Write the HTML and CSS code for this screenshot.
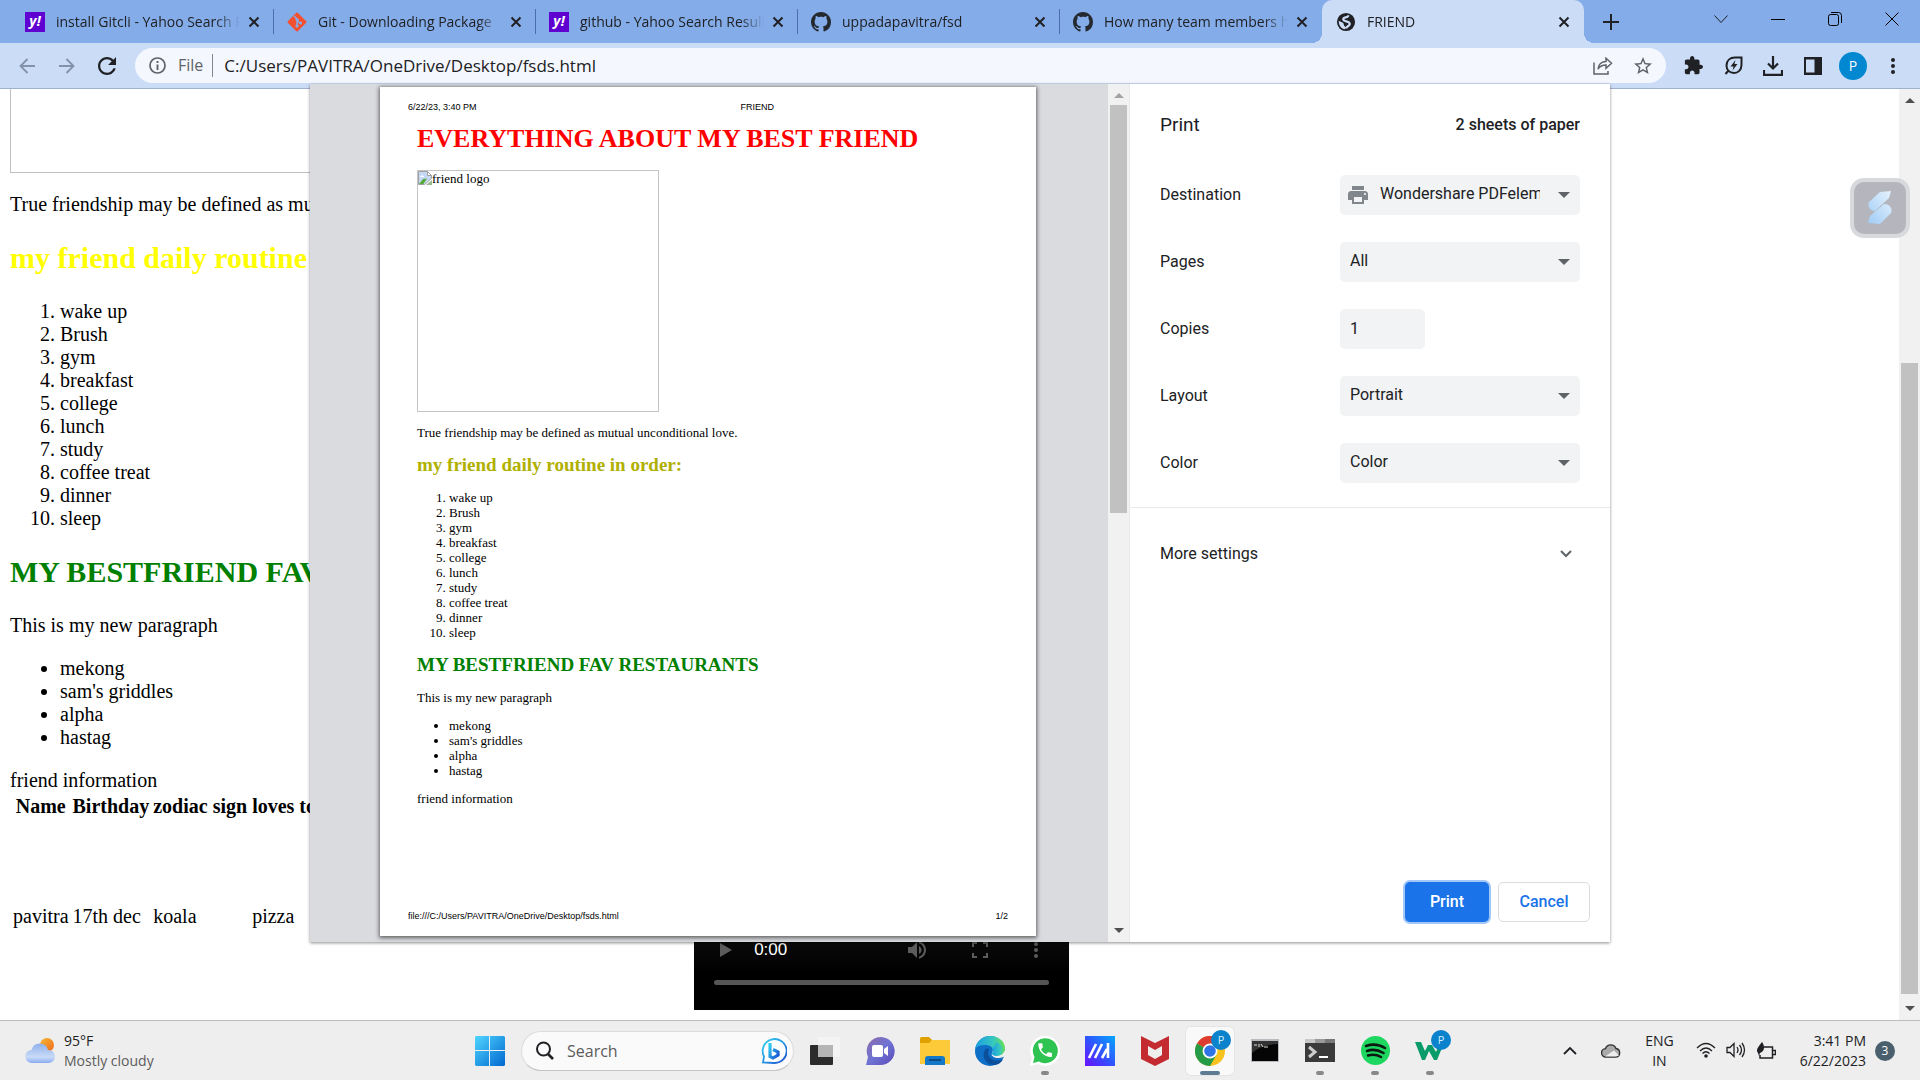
FILE: index.html
```html
<!DOCTYPE html>
<html lang="en">
<head>
<meta charset="utf-8">
<title>FRIEND</title>
<link rel="stylesheet" href="styles.css">
</head>
<body>
<svg class="defs" aria-hidden="true">
  <symbol id="close" viewBox="0 0 12 12"><path d="M1.5 1.5l9 9M10.5 1.5l-9 9" fill="none" stroke="currentColor" stroke-width="2"/></symbol>
  <symbol id="github" viewBox="0 0 16 16"><path fill="#24292f" d="M8 0C3.58 0 0 3.58 0 8c0 3.54 2.29 6.53 5.47 7.59.4.07.55-.17.55-.38 0-.19-.01-.82-.01-1.49-2.01.37-2.53-.49-2.69-.94-.09-.23-.48-.94-.82-1.13-.28-.15-.68-.52-.01-.53.63-.01 1.08.58 1.23.82.72 1.21 1.87.87 2.33.66.07-.52.28-.87.51-1.07-1.78-.2-3.64-.89-3.64-3.95 0-.87.31-1.59.82-2.15-.08-.2-.36-1.02.08-2.12 0 0 .67-.21 2.2.82.64-.18 1.32-.27 2-.27.68 0 1.36.09 2 .27 1.53-1.04 2.2-.82 2.2-.82.44 1.1.16 1.92.08 2.12.51.56.82 1.27.82 2.15 0 3.07-1.87 3.75-3.65 3.95.29.25.54.73.54 1.48 0 1.07-.01 1.93-.01 2.2 0 .21.15.46.55.38A8.013 8.013 0 0016 8c0-4.42-3.58-8-8-8z"/></symbol>
  <symbol id="caret" viewBox="0 0 12 6"><path d="M0 0h12L6 6z" fill="currentColor"/></symbol>
  <symbol id="caret-up" viewBox="0 0 12 6"><path d="M0 6h12L6 0z" fill="currentColor"/></symbol>
</svg>

<header class="tabstrip">
  <nav class="tabs" aria-label="Tabs">
    <div class="tab"><span class="favicon yahoo">y!</span><span class="tab-title">install Gitcli - Yahoo Search Results</span><button class="tab-close" aria-label="Close tab"><svg width="12" height="12"><use href="#close"/></svg></button></div>
    <div class="tab"><svg class="favicon" viewBox="0 0 20 20"><rect x="3" y="3" width="14" height="14" rx="1" transform="rotate(45 10 10)" fill="#f4502f"/><path d="M7 4l3 3v7M10 8l3.500 3.500" stroke="#84ace9" stroke-width="1.500" fill="none"/><circle cx="10" cy="7.500" r="1.600" fill="#84ace9"/><circle cx="10" cy="14" r="1.600" fill="#84ace9"/><circle cx="13.500" cy="11" r="1.600" fill="#84ace9"/></svg><span class="tab-title">Git - Downloading Package</span><button class="tab-close" aria-label="Close tab"><svg width="12" height="12"><use href="#close"/></svg></button></div>
    <div class="tab"><span class="favicon yahoo">y!</span><span class="tab-title">github - Yahoo Search Results</span><button class="tab-close" aria-label="Close tab"><svg width="12" height="12"><use href="#close"/></svg></button></div>
    <div class="tab"><svg class="favicon"><use href="#github"/></svg><span class="tab-title">uppadapavitra/fsd</span><button class="tab-close" aria-label="Close tab"><svg width="12" height="12"><use href="#close"/></svg></button></div>
    <div class="tab last"><svg class="favicon"><use href="#github"/></svg><span class="tab-title">How many team members have</span><button class="tab-close" aria-label="Close tab"><svg width="12" height="12"><use href="#close"/></svg></button></div>
    <div class="tab active"><svg class="favicon" viewBox="1 1 22 22"><circle cx="12" cy="12" r="10" fill="#202124"/><path d="M14.500 4.500c0 3.500-5.500 1.500-5.500 4.500s6 1.500 7 4.500-3 2.500-4 5.500" fill="none" stroke="#cbdcf7" stroke-width="2.400"/><path d="M4 10.500l5 2.500 1 3 2 2-1 2C7 19.500 4 16 4 10.500z" fill="#cbdcf7"/></svg><span class="tab-title">FRIEND</span><button class="tab-close" aria-label="Close tab"><svg width="12" height="12"><use href="#close"/></svg></button></div>
  </nav>
  <button class="icon-btn new-tab" aria-label="New tab"><svg width="16" height="16" viewBox="0 0 16 16"><path d="M8 0v16M0 8h16" stroke="#202124" stroke-width="2"/></svg></button>
  <div class="window-controls">
    <button class="icon-btn" aria-label="Search tabs"><svg width="14" height="14" viewBox="0 0 14 14"><path d="M.5 3.500l6.500 7 6.500-7" fill="none" stroke="#202124"/></svg></button>
    <button class="icon-btn" aria-label="Minimize"><svg width="14" height="14" viewBox="0 0 14 14"><path d="M0 7.500h14" stroke="#000"/></svg></button>
    <button class="icon-btn" aria-label="Restore"><svg width="14" height="14" viewBox="0 0 14 14"><rect x=".5" y="2.500" width="10" height="11" rx="2" fill="none" stroke="#000"/><path d="M3 .5h7.500a3 3 0 013 3V11" fill="none" stroke="#000"/></svg></button>
    <button class="icon-btn" aria-label="Close"><svg width="14" height="14" viewBox="0 0 14 14"><path d="M.5.5l13 13M13.500.5l-13 13" stroke="#000"/></svg></button>
  </div>
</header>

<div class="toolbar">
  <button class="icon-btn dim" aria-label="Back"><svg width="16" height="16" viewBox="0 0 16 16"><path d="M16 8H1.500M8.500 1L1.500 8l7 7" fill="none" stroke="currentColor" stroke-width="1.800"/></svg></button>
  <button class="icon-btn dim" aria-label="Forward"><svg width="16" height="16" viewBox="0 0 16 16"><path d="M0 8h14.500M7.500 1l7 7-7 7" fill="none" stroke="currentColor" stroke-width="1.800"/></svg></button>
  <button class="icon-btn" aria-label="Reload"><svg width="18" height="18" viewBox="4 4 16 16"><path fill="currentColor" d="M17.650 6.350C16.200 4.900 14.210 4 12 4c-4.420 0-7.990 3.580-7.990 8s3.570 8 7.990 8c3.730 0 6.840-2.550 7.730-6h-2.080c-.82 2.330-3.040 4-5.650 4-3.310 0-6-2.690-6-6s2.690-6 6-6c1.660 0 3.140.69 4.220 1.780L13 11h7V4l-2.350 2.350z"/></svg></button>
  <div class="omnibox">
    <svg width="17" height="17" viewBox="0 0 17 17"><circle cx="8.500" cy="8.500" r="7.500" fill="none" stroke="#5f6368" stroke-width="1.700"/><path d="M8.500 7.500V13M8.500 4v2" stroke="#5f6368" stroke-width="1.900"/></svg>
    <span class="scheme">File</span>
    <input class="url" type="text" aria-label="Address" value="C:/Users/PAVITRA/OneDrive/Desktop/fsds.html">
    <button class="icon-btn" aria-label="Share"><svg width="20" height="18" viewBox="0 0 20 18"><path d="M1 5.500V17h14v-3M5 12c.5-5 4-7.500 8-7.500V1.200l5.500 5-5.500 5V8C9 8 7 9 5 12z" fill="none" stroke="#5f6368" stroke-width="1.500"/></svg></button>
    <button class="icon-btn" aria-label="Bookmark"><svg width="18" height="18" viewBox="2 2 20 20"><path fill="#5f6368" d="M22 9.240l-7.190-.62L12 2 9.190 8.630 2 9.240l5.460 4.730L5.820 21 12 17.270 18.180 21l-1.630-7.030L22 9.240zM12 15.400l-3.760 2.270 1-4.280-3.320-2.880 4.380-.38L12 6.100l1.710 4.040 4.380.38-3.320 2.880 1 4.280L12 15.400z"/></svg></button>
  </div>
  <div class="extensions">
    <button class="icon-btn" aria-label="Extensions"><svg width="19" height="19" viewBox="1 1 22 22"><path fill="currentColor" d="M20.500 11H19V7c0-1.100-.9-2-2-2h-4V3.500C13 2.120 11.880 1 10.500 1S8 2.120 8 3.500V5H4c-1.100 0-1.990.9-1.990 2v3.800H3.500c1.490 0 2.700 1.210 2.700 2.700s-1.210 2.700-2.700 2.700H2V20c0 1.100.9 2 2 2h3.800v-1.500c0-1.490 1.210-2.700 2.700-2.700 1.490 0 2.700 1.210 2.700 2.700V22H17c1.100 0 2-.9 2-2v-4h1.500c1.380 0 2.500-1.120 2.500-2.500S21.880 11 20.500 11z"/></svg></button>
    <button class="icon-btn" aria-label="Energy saver"><svg width="19" height="19" viewBox="0 0 19 19"><path d="M17.500 1.500v7.500c0 5-3.500 8-7.500 8s-7.500-2.500-7.500-7.500 3.500-8 8.500-8zM4.500 14.500l-3 3.500" fill="none" stroke="currentColor" stroke-width="2"/><path d="M11.500 4L6.500 10.500h3l-1 4L13.500 8h-3z" fill="currentColor"/></svg></button>
    <button class="icon-btn" aria-label="Downloads"><svg width="20" height="20" viewBox="0 0 20 20"><path d="M10 0v12M5 7.500l5 5 5-5M1 14v4.800h18V14" fill="none" stroke="currentColor" stroke-width="2.200"/></svg></button>
    <button class="icon-btn" aria-label="Side panel"><svg width="18" height="18" viewBox="0 0 18 18"><path fill="currentColor" fill-rule="evenodd" d="M0 0h18v18H0zm2 2.500v13h8.500v-13z"/></svg></button>
    <button class="icon-btn" aria-label="Profile"><span class="avatar">P</span></button>
    <button class="icon-btn" aria-label="Menu"><svg width="4" height="16" viewBox="0 0 4 16"><g fill="currentColor"><circle cx="2" cy="2" r="2"/><circle cx="2" cy="8" r="2"/><circle cx="2" cy="14" r="2"/></g></svg></button>
  </div>
</div>

<main class="viewport">
  <article class="doc">
    <div class="doc-image"></div>
    <p>True friendship may be defined as mutual unconditional love.</p>
    <h2 class="yellow">my friend daily routine in order:</h2>
    <ol><li>wake up</li><li>Brush</li><li>gym</li><li>breakfast</li><li>college</li><li>lunch</li><li>study</li><li>coffee treat</li><li>dinner</li><li>sleep</li></ol>
    <h2 class="green">MY BESTFRIEND FAV RESTAURANTS</h2>
    <p>This is my new paragraph</p>
    <ul><li>mekong</li><li>sam's griddles</li><li>alpha</li><li>hastag</li></ul>
    <div class="info">friend information</div>
    <table>
      <thead><tr><th>Name</th><th>Birthday</th><th>zodiac sign</th><th class="loves">loves to eat</th><th></th></tr></thead>
      <tbody><tr><td>pavitra</td><td>17th dec</td><td>koala</td><td>pizza</td><td>
        <div class="video">
          <div class="video-controls">
            <button class="icon-btn" aria-label="Play"><svg width="12" height="14" viewBox="0 0 12 14"><path d="M0 0l12 7-12 7z" fill="currentColor"/></svg></button>
            <span class="video-time">0:00</span>
            <button class="icon-btn" aria-label="Mute"><svg width="24" height="24" viewBox="0 0 24 24"><path fill="currentColor" d="M3 9v6h4l5 5V4L7 9H3zm13.500 3c0-1.770-1.020-3.290-2.500-4.030v8.050c1.480-.73 2.500-2.250 2.500-4.020zM14 3.230v2.060c2.890.86 5 3.540 5 6.710s-2.110 5.850-5 6.710v2.060c4.010-.91 7-4.490 7-8.770s-2.990-7.860-7-8.770z"/></svg></button>
            <button class="icon-btn" aria-label="Full screen"><svg width="16" height="16" viewBox="0 0 16 16"><path d="M1 5V1h4M11 1h4v4M15 11v4h-4M5 15H1v-4" fill="none" stroke="currentColor" stroke-width="2"/></svg></button>
            <button class="icon-btn" aria-label="More"><svg width="4" height="16" viewBox="0 0 4 16"><g fill="currentColor"><circle cx="2" cy="2" r="2"/><circle cx="2" cy="8" r="2"/><circle cx="2" cy="14" r="2"/></g></svg></button>
          </div>
          <div class="video-track"></div>
        </div>
      </td></tr></tbody>
    </table>
  </article>
  <div class="scrollbar page-scroll">
    <svg width="10" height="5"><use href="#caret-up"/></svg>
    <div class="scroll-track"><div class="page-thumb"></div></div>
    <svg width="10" height="5"><use href="#caret"/></svg>
  </div>
  <button class="widget" aria-label="Assistant"><svg width="26" height="34" viewBox="0 0 26 34"><defs><linearGradient id="wg" x1="0" y1="1" x2="1" y2="0"><stop offset="0" stop-color="#9fcbf5"/><stop offset="1" stop-color="#e6f3fe"/></linearGradient></defs><path d="M13 1l11-1-2 7L8 20c-5 0-8-5-6-9zM13 33L1 32l2-7L17 13c6 0 9 5 7 9z" fill="url(#wg)"/></svg></button>

  <section class="dialog" role="dialog" aria-label="Print">
    <div class="preview">
      <div class="paper">
        <div class="paper-head"><span>6/22/23, 3:40 PM</span><span class="paper-title">FRIEND</span></div>
        <div class="paper-body">
          <h1>EVERYTHING ABOUT MY BEST FRIEND</h1>
          <div class="broken"><svg width="14" height="14" viewBox="0 0 14 14"><path d="M.5.5h9l4 4v3l-7 6h-6z" fill="#c5d8f5" stroke="#a0a0a0"/><path d="M9.500.5v4h4z" fill="#fff" stroke="#a0a0a0"/><path d="M1 13l4-5 4-.5L5.500 13z" fill="#58a93c"/><path d="M2 6c0-2 4-2 4 0z" fill="#fff"/><path d="M8 14l6-5v5z" fill="#9ab98f"/></svg><span>friend logo</span></div>
          <p>True friendship may be defined as mutual unconditional love.</p>
          <h2 class="olive">my friend daily routine in order:</h2>
          <ol><li>wake up</li><li>Brush</li><li>gym</li><li>breakfast</li><li>college</li><li>lunch</li><li>study</li><li>coffee treat</li><li>dinner</li><li>sleep</li></ol>
          <h2 class="green">MY BESTFRIEND FAV RESTAURANTS</h2>
          <p>This is my new paragraph</p>
          <ul><li>mekong</li><li>sam's griddles</li><li>alpha</li><li>hastag</li></ul>
          <p>friend information</p>
        </div>
        <div class="paper-foot"><span>file:///C:/Users/PAVITRA/OneDrive/Desktop/fsds.html</span><span>1/2</span></div>
      </div>
    </div>
    <div class="scrollbar preview-scroll">
      <svg class="muted" width="10" height="5"><use href="#caret-up"/></svg>
      <div class="scroll-track"><div class="preview-thumb"></div></div>
      <svg width="10" height="5"><use href="#caret"/></svg>
    </div>
    <form class="settings">
      <div class="settings-head"><span class="settings-title">Print</span><span class="sheets">2 sheets of paper</span></div>
      <div class="fields">
        <label for="dest">Destination</label>
        <div class="select"><select id="dest" class="with-icon"><option>Wondershare PDFelement</option></select><svg class="printer" width="24" height="24" viewBox="0 0 24 24"><path fill="#80868b" d="M19 8H5c-1.660 0-3 1.340-3 3v6h4v4h12v-4h4v-6c0-1.660-1.340-3-3-3zm-3 11H8v-5h8v5zm3-7c-.55 0-1-.45-1-1s.45-1 1-1 1 .45 1 1-.45 1-1 1zm-1-9H6v4h12V3z"/></svg><svg class="arrow" width="12" height="6"><use href="#caret"/></svg></div>
        <label for="pages">Pages</label>
        <div class="select"><select id="pages"><option>All</option></select><svg class="arrow" width="12" height="6"><use href="#caret"/></svg></div>
        <label for="copies">Copies</label>
        <input id="copies" type="text" value="1">
        <label for="layout">Layout</label>
        <div class="select"><select id="layout"><option>Portrait</option></select><svg class="arrow" width="12" height="6"><use href="#caret"/></svg></div>
        <label for="color">Color</label>
        <div class="select"><select id="color"><option>Color</option></select><svg class="arrow" width="12" height="6"><use href="#caret"/></svg></div>
      </div>
      <button type="button" class="more"><span>More settings</span><svg width="12" height="8" viewBox="0 0 12 8"><path d="M1 1l5 5 5-5" fill="none" stroke="#5f6368" stroke-width="2"/></svg></button>
      <div class="actions"><button type="button" class="btn primary">Print</button><button type="button" class="btn">Cancel</button></div>
    </form>
  </section>
</main>

<footer class="taskbar">
  <div class="weather">
    <svg width="30" height="26" viewBox="0 0 30 26"><defs><linearGradient id="sun" x1="0" y1="0" x2="1" y2="1"><stop offset="0" stop-color="#f7b733"/><stop offset="1" stop-color="#ee6a1c"/></linearGradient><linearGradient id="cl" x1="0" y1="0" x2="0" y2="1"><stop offset="0" stop-color="#8fb1ec"/><stop offset=".7" stop-color="#c9dbf7"/><stop offset="1" stop-color="#88aaf0"/></linearGradient></defs><circle cx="22" cy="7" r="7" fill="url(#sun)"/><path d="M7 25a6.500 6.500 0 01-.5-13A8.500 8.500 0 0123 12a6.500 6.500 0 011 13z" fill="url(#cl)"/></svg>
    <div class="two-line"><span>95°F</span><span class="soft">Mostly cloudy</span></div>
  </div>
  <div class="apps">
    <button class="app" aria-label="Start"><svg width="30" height="30" viewBox="0 0 30 30"><defs><linearGradient id="win" x1="0" y1="0" x2="1" y2="1"><stop offset="0" stop-color="#4fd6ff"/><stop offset="1" stop-color="#0067d0"/></linearGradient></defs><path d="M1 0h13v14H0V1zM15 0h14l1 1v13H15zM0 15h14v15H1l-1-1zM15 15h15v14l-1 1H15z" fill="url(#win)"/></svg></button>
    <label class="search"><svg width="20" height="20" viewBox="0 0 20 20"><circle cx="8.500" cy="8" r="6.500" fill="none" stroke="#202124" stroke-width="2"/><path d="M13 13l5 5" stroke="#202124" stroke-width="2.600"/></svg><input type="text" placeholder="Search" aria-label="Search"><svg width="26" height="26" viewBox="0 0 26 26"><defs><linearGradient id="bing" x1="0" y1="0" x2="1" y2="1"><stop offset="0" stop-color="#30d2f2"/><stop offset="1" stop-color="#1b4fd0"/></linearGradient></defs><path d="M2 24.500l1-6A12 12 0 1113 25z" fill="#fff" stroke="url(#bing)" stroke-width="1.800"/><path d="M9 5v13.500l3 1.500 5-3v-3l-5-2.500" fill="none" stroke="url(#bing)" stroke-width="3.200"/></svg></label>
    <button class="app" aria-label="Task view"><svg width="30" height="30" viewBox="0 0 30 30"><rect y="9" width="23" height="20" rx="1" fill="#2b2b2b"/><rect x="8" y="1" width="22" height="20" rx="1" fill="#f4f4f4"/><path d="M8 9h15v12H8z" fill="#b5b5b5"/></svg></button>
    <button class="app" aria-label="Chat"><svg width="30" height="30" viewBox="0 0 30 30"><defs><linearGradient id="chat" x1="0" y1="0" x2="1" y2="1"><stop offset="0" stop-color="#8f6aa8"/><stop offset=".5" stop-color="#6f74d4"/><stop offset="1" stop-color="#5a48b8"/></linearGradient></defs><path d="M1 29l2-8A14 14 0 1115 29z" fill="url(#chat)"/><rect x="7" y="9" width="11" height="12" rx="2" fill="#fff"/><path d="M19 13l4-3v10l-4-3z" fill="#fff"/></svg></button>
    <button class="app" aria-label="File Explorer"><svg width="30" height="28" viewBox="0 0 30 28"><path d="M0 1.500Q0 0 1.500 0H9l3 3-2 4H0z" fill="#e0a000"/><path d="M0 6h9l3-3h18v24H0z" fill="#fdcb3a"/><path d="M5 28v-6q0-3 3-3h14q3 0 3 3v6z" fill="#1478c8"/><path d="M9 23h12" stroke="#0a4a86" stroke-width="2"/></svg></button>
    <button class="app" aria-label="Edge"><svg width="30" height="30" viewBox="0 0 30 30"><defs><linearGradient id="eg" x1="0" y1="0" x2="1" y2="0"><stop offset="0" stop-color="#1b9de2"/><stop offset=".6" stop-color="#35c7c0"/><stop offset="1" stop-color="#6be04f"/></linearGradient></defs><circle cx="15" cy="15" r="15" fill="#0f6ec6"/><path d="M0 14C1 5 8 0 15 0c9 0 15 6 15 12 0 5-4 8-9 8-4 0-5-2-4-3 3-4-1-8-6-8C6 9 1 10 0 14z" fill="url(#eg)"/><path d="M10 14c-4 6 1 15 9 15 4 0 8-3 9-6-3 2-8 2-11 0-4-2-5-6-3-9 0-2-3-2-4 0z" fill="#0c4f9a"/><path d="M17.500 15c1.500 3-1 4-1 3 0 2 3 4.500 8 4 2 0 4-2 5.500-1v-6z" fill="#eee"/><path d="M17 13c2 2 1 4 0 5 1 2 4 2 5 2 4 0 8-3 8-8L22 6z" fill="url(#eg)"/></svg></button>
    <button class="app running" aria-label="WhatsApp"><svg width="30" height="30" viewBox="0 0 30 30"><path d="M0 30l2-8A15 15 0 118 28z" fill="#fff"/><path d="M3 27l1.500-6A12.500 12.500 0 119 25.500z" fill="#2fc352"/><path transform="translate(6 5) scale(.76)" fill="#fff" d="M6.620 10.790c1.440 2.830 3.760 5.140 6.590 6.590l2.200-2.200c.27-.27.67-.36 1.020-.24 1.120.37 2.330.57 3.570.57.55 0 1 .45 1 1V20c0 .55-.45 1-1 1-9.390 0-17-7.610-17-17 0-.55.45-1 1-1h3.500c.55 0 1 .45 1 1 0 1.250.2 2.450.57 3.570.11.35.03.74-.25 1.020l-2.200 2.200z"/></svg></button>
    <button class="app" aria-label="MyASUS"><svg width="30" height="30" viewBox="0 0 30 30"><defs><linearGradient id="asus" x1="0" y1="1" x2="1" y2="0"><stop offset="0" stop-color="#6a11ff"/><stop offset=".5" stop-color="#2f55ff"/><stop offset="1" stop-color="#06a8ff"/></linearGradient></defs><path d="M0 0h30v30H0z" fill="url(#asus)"/><path d="M4 22l7-14M10 22l7-14M17 22l5-9M23 7v15" fill="none" stroke="#fff" stroke-width="2.600"/></svg></button>
    <button class="app" aria-label="McAfee"><svg width="28" height="30" viewBox="0 0 28 30"><path d="M0 0l14 7L28 0v23l-14 7-14-7zM7 10v9l7 4 7-4v-9l-7 4z" fill="#c42b30" fill-rule="evenodd"/></svg></button>
    <button class="app current" aria-label="Chrome"><svg width="30" height="30" viewBox="0 0 30 30"><circle cx="15" cy="15" r="15" fill="#f9c31f"/><path d="M15 15L2 7.500A15 15 0 0128 7.500H15z" fill="#de3b31"/><path d="M2 7.500A15 15 0 0015 30l6.500-11.500L15 15z" fill="#259b48"/><circle cx="15" cy="15" r="7.500" fill="#fff"/><circle cx="15" cy="15" r="5.800" fill="#2f74e6"/></svg><span class="badge">P</span></button>
    <button class="app" aria-label="Command Prompt"><svg width="28" height="23" viewBox="0 0 28 23"><path d="M0 0h28v23H0z" fill="#b8bcc0"/><path d="M1 2h26v20H1z" fill="#050505"/><path d="M1 2h26v3Q10 6 1 14z" fill="#333"/><path d="M3 6h3M8 5v3M10 5l2 3M13 8h4" stroke="#ddd"/></svg></button>
    <button class="app running" aria-label="Terminal"><svg width="30" height="23" viewBox="0 0 30 23"><path d="M0 0h30v23H0z" fill="#3a3a3a"/><path d="M0 0h10v4H0z" fill="#c8c8c8"/><path d="M10 0h10v4H10z" fill="#9a9a9a"/><path d="M20 0h10v4H20z" fill="#777"/><path d="M4 8l6 5-6 5" fill="none" stroke="#ccc" stroke-width="3"/><path d="M14 18h9" stroke="#fff" stroke-width="2"/></svg></button>
    <button class="app running" aria-label="Spotify"><svg width="29" height="29" viewBox="0 0 29 29"><circle cx="14.500" cy="14.500" r="14.500" fill="#1ed760"/><path d="M5 10q10-3.500 19 2M6 15q8-3 16.500 2M7 19.500q7-2 13 1.500" fill="none" stroke="#0b1a10" stroke-width="2.600" stroke-linecap="round"/></svg></button>
    <button class="app running" aria-label="Wondershare"><svg width="30" height="20" viewBox="0 0 30 20"><path d="M0 1h6l4 9 3-6h4l4 7 4-9h4l-7 17h-3l-5-9-4 9H7z" fill="#0a9b6b"/></svg><span class="badge">P</span></button>
  </div>
  <div class="tray">
    <svg width="14" height="9" viewBox="0 0 14 9"><path d="M1 8l6-6 6 6" fill="none" stroke="#202124" stroke-width="1.800"/></svg>
    <svg class="cloud" width="20" height="15" viewBox="0 0 20 15"><path d="M5 14a4.200 4.200 0 01-.5-8.400A5.600 5.600 0 0115 5.500a4.300 4.300 0 010 8.500z" fill="#aaa" stroke="#303030" stroke-width="1.400"/><path d="M4 13.500l9-6 5 5-3 1z" fill="#eee"/></svg>
    <div class="two-line lang"><span>ENG</span><span>IN</span></div>
    <div class="status">
      <svg width="20" height="16" viewBox="0 0 20 16"><g fill="none" stroke="#202124" stroke-width="1.300"><path d="M1 6q9-9 18 0M4 9q6-6 12 0M6.500 11.500q3.500-3.500 7 0"/></g><circle cx="10" cy="14" r="1.800" fill="#202124"/></svg>
      <svg width="20" height="16" viewBox="0 0 20 16"><g fill="none" stroke="#202124" stroke-width="1.300"><path d="M1 5.500h3l4-4v13l-4-4H1zM11 5q2 3 0 6M13.500 3q4 5 0 10M16 1q5 7 0 14"/></g></svg>
      <svg width="20" height="18" viewBox="0 0 20 18"><path d="M8 5h8.500v11H4v-3M17 8.500h2.500v4H17" fill="none" stroke="#202124" stroke-width="1.500"/><path d="M6 0c3 4 3 9-2 11L3 14l-1-3C-1 8 3 4 6 0z" fill="#202124"/></svg>
    </div>
    <div class="two-line clock"><span>3:41 PM</span><span>6/22/2023</span></div>
    <span class="count">3</span>
  </div>
</footer>
</body>
</html>
```
FILE: styles.css
```css
* { box-sizing: border-box; }

body {
  margin: 0;
  min-height: 100vh;
  display: flex;
  flex-direction: column;
  overflow: hidden;
  background: #fff;
  color: #202124;
  font-family: "Open Sans", "Noto Sans", sans-serif;
  font-size: 14px;
}

button, input, select { font: inherit; color: inherit; }
svg { display: block; flex: none; }
.defs { position: absolute; width: 0; height: 0; }

.icon-btn {
  display: flex;
  align-items: center;
  justify-content: center;
  width: 40px;
  height: 32px;
  padding: 0;
  border: 0;
  background: none;
}
.dim { color: #8491a8; }

/* Tab strip */
.tabstrip {
  display: flex;
  align-items: center;
  height: 43px;
  padding-left: 12px;
  background: #84ace9;
}
.tabs { display: flex; align-self: stretch; }
.tab {
  position: relative;
  display: flex;
  align-items: center;
  width: 262px;
  padding: 0 10px 0 13px;
}
.tab::after {
  content: "";
  position: absolute;
  right: 0;
  top: 9px;
  width: 1px;
  height: 25px;
  background: #4b6fa8;
}
.tab.last::after { display: none; }
.tab.active {
  padding-left: 14px;
  border-radius: 10px 10px 0 0;
  background: #cbdcf7;
}
.tab.active::before,
.tab.active::after {
  content: "";
  position: absolute;
  top: auto;
  bottom: 0;
  width: 10px;
  height: 10px;
}
.tab.active::before { left: -10px; background: radial-gradient(circle at 0 0, #84ace9 10px, #cbdcf7 10px); }
.tab.active::after { right: -10px; background: radial-gradient(circle at 100% 0, #84ace9 10px, #cbdcf7 10px); }
.favicon { width: 20px; height: 20px; flex: none; }
.yahoo {
  background: #5f01d1;
  color: #fff;
  font: italic bold 14px/18px "Open Sans", sans-serif;
  text-align: center;
}
.tab-title {
  flex: 1;
  margin-left: 11px;
  overflow: hidden;
  white-space: nowrap;
  mask-image: linear-gradient(to left, transparent, #000 24px);
}
.tab-close {
  display: flex;
  margin-left: 4px;
  padding: 4px;
  border: 0;
  background: none;
}
.new-tab { margin-left: 7px; }
.window-controls { display: flex; margin-left: auto; padding-bottom: 6px; }
.window-controls .icon-btn { width: 57px; }

/* Toolbar */
.toolbar {
  display: flex;
  align-items: center;
  height: 46px;
  padding: 0 7px;
  border-bottom: 1px solid #9fb1d1;
  background: #cbdcf7;
}
.omnibox {
  display: flex;
  flex: 1;
  align-items: center;
  height: 35px;
  margin-left: 8px;
  padding: 0 3px 0 14px;
  border-radius: 18px;
  background: #f4f7fd;
  font-size: 16px;
}
.scheme {
  margin-left: 12px;
  padding-right: 9px;
  border-right: 1px solid #80868b;
  line-height: 23px;
  color: #5f6368;
}
.url {
  flex: 1;
  margin-left: 11px;
  padding: 0;
  border: 0;
  background: none;
  outline: 0;
  font-size: 17px;
}
.extensions { display: flex; margin-left: 7px; }
.avatar {
  width: 28px;
  height: 28px;
  border-radius: 50%;
  background: #0288d1;
  color: #fff;
  font-size: 14px;
  line-height: 28px;
  text-align: center;
}

/* Page behind the dialog */
.viewport { position: relative; display: flex; flex: 1; }
.doc {
  flex: 1;
  padding-left: 10px;
  color: #000;
  font: 20px/23px "Liberation Serif", "Times New Roman", serif;
}
.doc-image { width: 377px; height: 84px; border: 1px solid #c0c0c0; border-top: 0; }
.doc p { margin: 20px 0; }
.doc h2 { margin: 25px 0; font-size: 30px; line-height: 34px; }
.doc ol, .doc ul { margin: 20px 0; padding-left: 50px; }
.yellow { color: #ff0; }
.green { color: #008000; }
.olive { color: #b0b000; }
.doc table { border-spacing: 2px; }
.doc th, .doc td { padding: 1px; }
.doc th:nth-child(3), .doc td:nth-child(3) { padding-right: 2px; }
.doc .loves { width: 440px; text-align: left; }
.video {
  display: flex;
  flex-direction: column;
  justify-content: flex-end;
  width: 375px;
  height: 188px;
  padding: 0 10px 25px;
  background: linear-gradient(#303030, #000 80%);
  color: #5c5c5c;
}
.video-controls { display: flex; align-items: center; padding-bottom: 14px; }
.video-controls .icon-btn { width: 60px; }
.video-controls .icon-btn:first-child { width: 44px; }
.video-controls .icon-btn:last-child { width: 46px; }
.video-controls .icon-btn:nth-last-child(2) { width: 66px; }
.video-time {
  flex: 1;
  margin-left: 6px;
  color: #fff;
  font: 17px/20px "Liberation Sans", Arial, sans-serif;
}
.video-track { height: 5px; margin: 0 10px; border-radius: 3px; background: #555; }

.scrollbar {
  display: flex;
  flex-direction: column;
  align-items: center;
  width: 21px;
  padding: 9px 0;
  background: #f1f1f1;
  color: #505050;
}
.scroll-track { flex: 1; align-self: stretch; margin: 7px 2px; }
.page-thumb { height: 71%; margin-top: 253px; background: #c1c1c1; }
.muted { color: #a3a3a3; }
.widget {
  position: absolute;
  top: 89px;
  right: 10px;
  display: flex;
  align-items: center;
  justify-content: center;
  width: 60px;
  height: 60px;
  padding: 0;
  border: 4px solid #d8d9dd;
  border-radius: 14px;
  background: #b5b6bd;
}

/* Print dialog */
.dialog {
  position: absolute;
  top: -5px;
  left: 0;
  right: 0;
  display: flex;
  width: 1300px;
  margin: 0 auto;
  background: #fff;
  box-shadow: 0 1px 3px rgba(0, 0, 0, .45);
}
.preview {
  flex: 1;
  display: flex;
  justify-content: center;
  padding: 3px 2px 6px 0;
  background: #dadbdf;
}
.paper {
  display: flex;
  flex-direction: column;
  width: 656px;
  min-height: 849px;
  padding: 14px 28px;
  background: #fff;
  box-shadow: 0 1px 4px 1px rgba(0, 0, 0, .55);
  color: #000;
  font: 13px/15px "Liberation Serif", "Times New Roman", serif;
}
.paper-head, .paper-foot {
  display: flex;
  justify-content: space-between;
  font: 9px/12px "Liberation Sans", Arial, sans-serif;
}
.paper-title { flex: 1; padding-left: 30px; text-align: center; }
.paper-foot { margin-top: auto; }
.paper-body { padding: 11px 9px 0; }
.paper h1 { margin: 0 0 16px; color: red; font-size: 26px; line-height: 30px; }
.paper h2 { margin: 14px 0; font-size: 19px; line-height: 22px; }
.paper p { margin: 13px 0; }
.paper ol, .paper ul { margin: 13px 0; padding-left: 32px; }
.broken { display: flex; width: 242px; height: 242px; border: 1px solid #c4c4c4; }

.preview-scroll { width: 22px; border-right: 1px solid #e8e8e8; }
.preview-thumb { height: 50%; background: #c1c1c1; }

.settings {
  display: flex;
  flex-direction: column;
  width: 480px;
  font: 16px/20px Roboto, sans-serif;
}
.settings-head {
  display: flex;
  align-items: center;
  justify-content: space-between;
  padding: 31px 30px 0;
}
.settings-title { font-size: 19px; }
.sheets { font-weight: 500; }
.fields {
  display: grid;
  grid-template-columns: 180px 240px;
  row-gap: 27px;
  align-items: center;
  padding: 40px 30px 24px;
  border-bottom: 1px solid #e8eaed;
}
.select { display: grid; grid-template-columns: 100%; align-items: center; }
.select > * { grid-area: 1 / 1; }
.select select, #copies {
  min-width: 0;
  height: 40px;
  padding: 0 40px 2px 10px;
  border: 0;
  border-radius: 5px;
  background: #f1f3f4;
  appearance: none;
}
.select .with-icon { padding-left: 40px; }
#copies { width: 85px; padding-right: 10px; }
.arrow { justify-self: end; margin-right: 10px; color: #5f6368; pointer-events: none; }
.printer { margin-left: 6px; pointer-events: none; }
.more {
  display: flex;
  align-items: center;
  justify-content: space-between;
  padding: 36px 38px 0 30px;
  border: 0;
  background: none;
}
.actions { display: flex; gap: 9px; justify-content: flex-end; margin-top: auto; padding: 20px; }
.btn {
  width: 92px;
  height: 40px;
  padding: 0;
  border: 1px solid #dadce0;
  border-radius: 5px;
  background: #fff;
  color: #1a73e8;
  font-weight: 500;
}
.btn.primary {
  width: 84px;
  border: 0;
  background: #1a73e8;
  color: #fff;
  box-shadow: 0 0 0 2px #a3c7f7;
}

/* Taskbar */
.taskbar {
  position: relative;
  display: grid;
  grid-template-columns: 1fr auto 1fr;
  align-items: center;
  height: 60px;
  border-top: 1px solid #bdbdbd;
  background: #eee;
}
.weather { display: flex; align-items: center; gap: 9px; padding-left: 25px; }
.two-line { display: flex; flex-direction: column; line-height: 20px; }
.soft { color: #5c5c5c; }
.apps { display: flex; align-items: center; gap: 7px; }
.app {
  position: relative;
  display: flex;
  align-items: center;
  justify-content: center;
  width: 48px;
  height: 48px;
  padding: 0;
  border: 0;
  border-radius: 5px;
  background: none;
}
.app.current { background: #f9f9f9; box-shadow: 0 0 0 1px #e4e4e4; }
.app.running::after, .app.current::after {
  content: "";
  position: absolute;
  bottom: 0;
  width: 8px;
  height: 4px;
  border-radius: 2px;
  background: #888;
}
.app.current::after { width: 20px; background: #5d7c93; }
.badge {
  position: absolute;
  top: 3px;
  right: 3px;
  width: 20px;
  height: 20px;
  border-radius: 50%;
  background: #0b82cc;
  color: #d5ecfb;
  font-size: 11px;
  line-height: 20px;
  text-align: center;
}
.search {
  display: flex;
  align-items: center;
  width: 273px;
  height: 40px;
  padding: 0 6px 0 13px;
  border: 1px solid #dcdcdc;
  border-bottom-color: #c4c4c4;
  border-radius: 20px;
  background: #fafafa;
}
.search input {
  flex: 1;
  min-width: 0;
  margin-left: 12px;
  padding: 0;
  border: 0;
  outline: 0;
  background: none;
  font-size: 16px;
}
.search input::placeholder { color: #5c5c5c; opacity: 1; }
.tray { display: flex; align-items: center; justify-content: flex-end; padding-right: 25px; }
.cloud { margin: 0 24px; }
.lang { align-items: center; }
.status { display: flex; gap: 10px; margin: 0 24px 0 22px; }
.clock { align-items: flex-end; }
.count {
  width: 20px;
  height: 20px;
  margin-left: 9px;
  border-radius: 50%;
  background: #4a5f6e;
  color: #fff;
  font-size: 12px;
  line-height: 20px;
  text-align: center;
}
```
